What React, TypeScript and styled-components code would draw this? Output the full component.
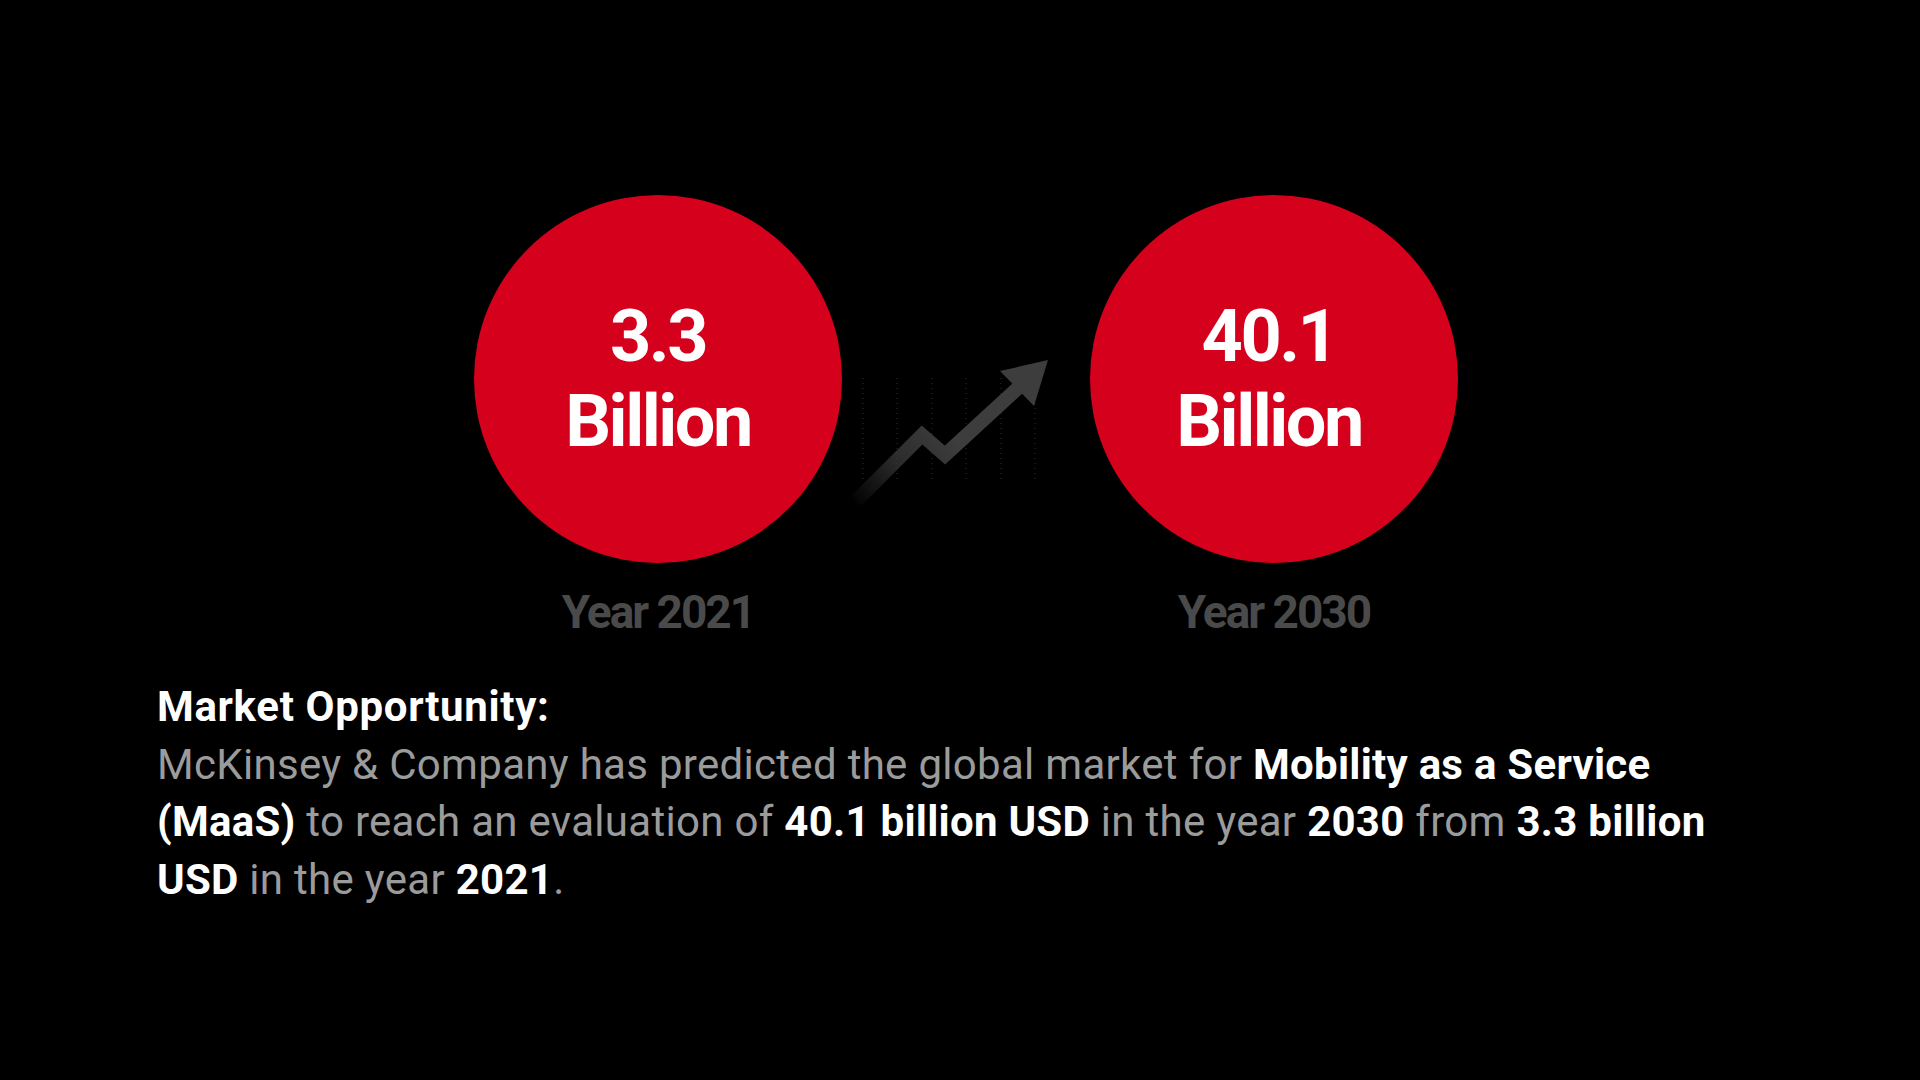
import React from "react";
import styled, { createGlobalStyle } from "styled-components";

const GlobalStyle = createGlobalStyle`
  html, body {
    margin: 0;
    padding: 0;
    background: #000;
  }
  body {
    font-family: Roboto, "Liberation Sans", Arial, sans-serif;
    -webkit-font-smoothing: antialiased;
  }
`;

const Page = styled.main`
  width: 1920px;
  height: 1080px;
  background: #000;
  box-sizing: border-box;
  padding-top: 195px;
  display: flex;
  flex-direction: column;
  overflow: hidden;
`;

const StatsRow = styled.section`
  display: flex;
  justify-content: center;
  padding-left: 12px;
`;

const StatColumn = styled.div`
  width: 368px;
  display: flex;
  flex-direction: column;
  align-items: center;
`;

const Circle = styled.div`
  width: 368px;
  height: 368px;
  border-radius: 50%;
  background: #d5001c;
  display: flex;
  flex-direction: column;
  align-items: center;
  justify-content: center;
`;

const CircleLine = styled.div<{ $shift?: number }>`
  color: #fff;
  font-family: Roboto, "Liberation Sans", Arial, sans-serif;
  font-weight: 700;
  font-size: 72px;
  line-height: 85px;
  letter-spacing: -2.5px;
  text-align: center;
  margin-right: ${(p) => (p.$shift ? `${p.$shift}px` : "0")};
`;

const YearLabel = styled.div`
  margin-top: 26px;
  color: #4a4a4a;
  font-family: Roboto, "Liberation Sans", Arial, sans-serif;
  font-weight: 700;
  font-size: 46px;
  line-height: 46px;
  letter-spacing: -2px;
`;

const ChartSlot = styled.div`
  width: 248px;
  height: 368px;
  flex: none;
`;

const Description = styled.section`
  margin-top: 43px;
  padding-left: 157px;
  width: 1600px;
  font-family: Roboto, "Liberation Sans", Arial, sans-serif;
  font-size: 42px;
  line-height: 57.5px;
  color: #9b9b9b;
`;

const Heading = styled.h2`
  margin: 0;
  font-size: 42px;
  line-height: 57.5px;
  font-weight: 700;
  color: #fff;
  letter-spacing: 0.66px;
`;

const Body = styled.p`
  margin: 0;
  font-weight: 400;
  letter-spacing: 0.3px;
`;

const Strong = styled.strong`
  color: #fff;
  font-weight: 700;
  letter-spacing: 0.26px;
`;

const TrendChart: React.FC = () => {
  const grid = [21, 55, 90, 124, 159, 193];
  return (
    <svg width="248" height="368" viewBox="0 0 248 368">
      <defs>
        <linearGradient
          id="arrowFade"
          gradientUnits="userSpaceOnUse"
          x1="10"
          y1="310"
          x2="100"
          y2="230"
        >
          <stop offset="0" stopColor="#3c3c3c" stopOpacity="0" />
          <stop offset="0.55" stopColor="#3c3c3c" stopOpacity="0.75" />
          <stop offset="1" stopColor="#3d3d3d" stopOpacity="1" />
        </linearGradient>
      </defs>
      {grid.map((x) => (
        <line
          key={x}
          x1={x}
          y1={183}
          x2={x}
          y2={288}
          stroke="#303030"
          strokeWidth="1"
          strokeDasharray="1 4"
        />
      ))}
      <polyline
        points="14,306 80,240 103,260 176,193"
        fill="none"
        stroke="url(#arrowFade)"
        strokeWidth="14"
        strokeLinejoin="miter"
        strokeLinecap="butt"
      />
      <polygon points="158,176 206,165 192,211" fill="#3d3d3d" />
    </svg>
  );
};

const Stat: React.FC<{ value: string; year: string; shift?: number }> = ({
  value,
  year,
  shift,
}) => (
  <StatColumn>
    <Circle>
      <CircleLine $shift={shift}>{value}</CircleLine>
      <CircleLine $shift={shift}>Billion</CircleLine>
    </Circle>
    <YearLabel>{year}</YearLabel>
  </StatColumn>
);

export default function App() {
  return (
    <>
      <GlobalStyle />
      <Page>
        <StatsRow>
          <Stat value="3.3" year="Year 2021" />
          <ChartSlot>
            <TrendChart />
          </ChartSlot>
          <Stat value="40.1" year="Year 2030" shift={10} />
        </StatsRow>
        <Description>
          <Heading>Market Opportunity:</Heading>
          <Body>
            McKinsey &amp; Company has predicted the global market for{" "}
            <Strong>Mobility as a Service (MaaS)</Strong> to reach an evaluation of{" "}
            <Strong>40.1 billion USD</Strong> in the year <Strong>2030</Strong> from{" "}
            <Strong>3.3 billion USD</Strong> in the year <Strong>2021</Strong>.
          </Body>
        </Description>
      </Page>
    </>
  );
}
